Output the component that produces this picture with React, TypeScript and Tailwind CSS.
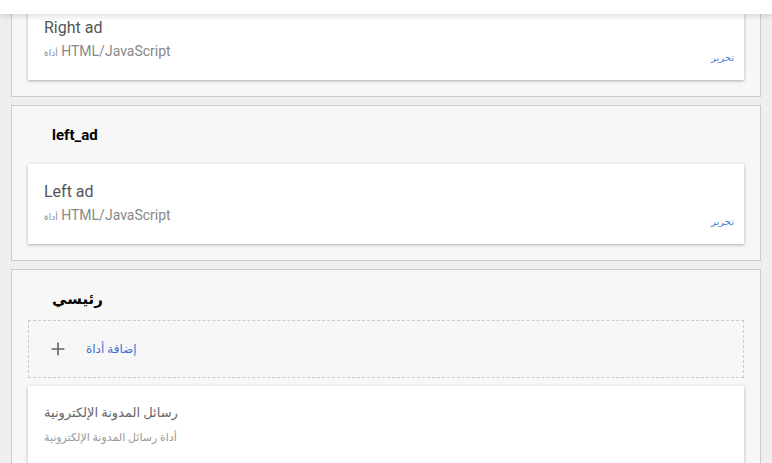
import { Plus } from "lucide-react";

const font = "font-['Roboto','DejaVu_Sans',sans-serif]";

function WidgetCard({ title, type }: { title: string; type: string }) {
  return (
    <div className="flex h-[80px] bg-white shadow-[0_1px_3px_rgba(0,0,0,0.3)]">
      <div className="flex-1 pl-4 pt-[17px]">
        <div className="text-[16px] leading-[22px] text-[#555]">{title}</div>
        <div className="mt-[4px] text-[14px] leading-[16px] text-[#888]">
          <span className="text-[9px]">أداة</span> {type}
        </div>
      </div>
      <div className="self-end pb-[16px] pr-[10px] text-[10px] leading-[12px] text-[#4a7fd8]">
        تحرير
      </div>
    </div>
  );
}

function Section({
  title,
  children,
  titleGap = "mb-[18px]",
}: {
  title?: string;
  children: React.ReactNode;
  titleGap?: string;
}) {
  return (
    <section
      className={`border border-[#ccc] bg-[#f7f7f7] px-4 pb-4 ${title ? "pt-[18px]" : "border-t-0 pt-0"}`}
    >
      {title && (
        <h2 className={`pl-6 text-[15px] font-bold leading-[22px] text-black ${titleGap}`}>
          {title}
        </h2>
      )}
      {children}
    </section>
  );
}

export default function App() {
  return (
    <div className={`relative h-[463px] overflow-hidden bg-[#efefef] ${font}`}>
      {/* sticky header strip */}
      <div className="absolute inset-x-0 top-0 z-10 h-[14px] bg-white shadow-[0_2px_6px_rgba(0,0,0,0.14)]" />

      <div className="flex flex-col gap-2 px-[11px]">
        {/* right_ad, scrolled so its heading is out of view */}
        <Section>
          <WidgetCard title="Right ad" type="HTML/JavaScript" />
        </Section>

        <Section title="left_ad">
          <WidgetCard title="Left ad" type="HTML/JavaScript" />
        </Section>

        <Section title="رئيسي" titleGap="mb-[10px]">
          <div className="flex h-[58px] items-center border border-dashed border-[#ccc] bg-[#f7f7f7] pl-[19px]">
            <Plus className="h-[20px] w-[20px] text-[#666]" strokeWidth={2} />
            <span className="ml-[18px] text-[12px] text-[#3f6fd1]">إضافة أداة</span>
          </div>
          <div className="mt-2 h-[120px] bg-white pl-4 pt-[17px] shadow-[0_1px_3px_rgba(0,0,0,0.3)]">
            <div className="text-[13px] leading-[20px] text-[#666]">
              رسائل المدونة الإلكترونية
            </div>
            <div className="mt-[7px] text-[11px] leading-[16px] text-[#999]">
              أداة رسائل المدونة الإلكترونية
            </div>
          </div>
        </Section>
      </div>
    </div>
  );
}
